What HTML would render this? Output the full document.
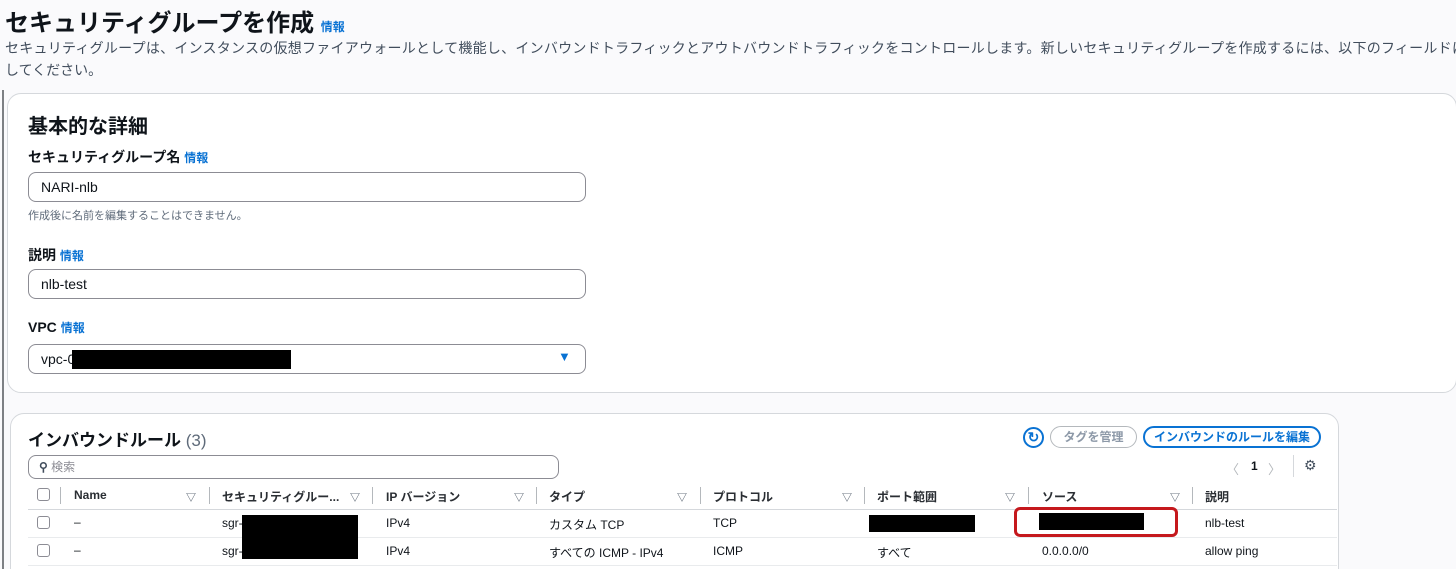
<!DOCTYPE html>
<html><head><meta charset="utf-8"><style>
*{box-sizing:border-box;margin:0;padding:0}
html,body{width:1456px;height:569px;overflow:hidden}
body{background:#fafafc;font-family:"Liberation Sans","Noto Sans CJK JP",sans-serif;color:#0f141a;position:relative}
.a{position:absolute;white-space:nowrap}
.info{color:#0972d3;font-weight:bold;font-size:12px}
.card{position:absolute;background:#fff;border:1px solid #d5d8dc;border-radius:14px}
.inp{position:absolute;border:1px solid #8c8c94;border-radius:8px;background:#fff;font-size:14px;padding-left:12px;line-height:28px}
.lbl{font-size:14px;font-weight:bold}
.blk{position:absolute;background:#000}
.th{position:absolute;top:488px;font-size:12px;font-weight:bold;color:#2a2e33}
.sep{position:absolute;top:487px;width:1px;height:17px;background:#b4b8bc}
.tri{position:absolute;top:489px;font-size:10px;color:#414d5c}
.td{position:absolute;font-size:12px;color:#0f141a}
.cb{position:absolute;width:13px;height:13px;border:1px solid #8c8c94;border-radius:3px;background:#fff}
</style></head><body>
<div class="a" style="left:2px;top:90px;width:2px;height:479px;background:#7d8084"></div>
<div class="a" style="left:5px;top:3px;font-size:24px;font-weight:bold">セキュリティグループを作成 <span class="info" style="font-size:12px">情報</span></div>
<div class="a" style="left:5px;top:38px;font-size:14px;letter-spacing:0.25px;color:#414d5c">セキュリティグループは、インスタンスの仮想ファイアウォールとして機能し、インバウンドトラフィックとアウトバウンドトラフィックをコントロールします。新しいセキュリティグループを作成するには、以下のフィールドに</div>
<div class="a" style="left:5px;top:60px;font-size:14px;color:#414d5c">してください。</div>

<div class="card" style="left:7px;top:93px;width:1450px;height:300px"></div>
<div class="a" style="left:28px;top:110px;font-size:20px;font-weight:bold">基本的な詳細</div>
<div class="a lbl" style="left:28px;top:147px">セキュリティグループ名 <span class="info">情報</span></div>
<div class="inp" style="left:28px;top:172px;width:558px;height:30px">NARI-nlb</div>
<div class="a" style="left:28px;top:207px;font-size:11px;color:#5f6b7a">作成後に名前を編集することはできません。</div>
<div class="a lbl" style="left:28px;top:245px">説明 <span class="info">情報</span></div>
<div class="inp" style="left:28px;top:269px;width:558px;height:30px">nlb-test</div>
<div class="a lbl" style="left:28px;top:319px">VPC <span class="info">情報</span></div>
<div class="inp" style="left:28px;top:344px;width:558px;height:30px">vpc-0</div>
<div class="blk" style="left:72px;top:350px;width:219px;height:19px"></div>
<div class="a" style="left:558px;top:349px;color:#0972d3;font-size:13px">▼</div>

<div class="card" style="left:10px;top:413px;width:1329px;height:170px"></div>
<div class="a" style="left:28px;top:426px;font-size:17px;font-weight:bold">インバウンドルール <span style="font-weight:normal;color:#5f6b7a">(3)</span></div>
<div class="a" style="left:1023px;top:427px;width:21px;height:21px;border:2px solid #0972d3;border-radius:50%;color:#0972d3;font-size:14px;font-weight:bold;text-align:center;line-height:17px">↻</div>
<div class="a" style="left:1050px;top:426px;width:87px;height:22px;border:1px solid #b4b8bc;border-radius:12px;color:#8d99a8;font-size:12px;font-weight:bold;text-align:center;line-height:20px">タグを管理</div>
<div class="a" style="left:1143px;top:426px;width:178px;height:22px;border:2px solid #0972d3;border-radius:12px;color:#0972d3;font-size:12px;font-weight:bold;text-align:center;line-height:18px">インバウンドのルールを編集</div>
<div class="inp" style="left:28px;top:455px;width:531px;height:24px;line-height:22px;font-size:12px;color:#8c8c94;padding-left:10px"><span style="color:#414d5c;font-weight:bold">⚲</span> 検索</div>
<div class="a" style="left:1226px;top:459px;font-size:13px;color:#b4b8bc">〈</div>
<div class="a" style="left:1251px;top:459px;font-size:12px;font-weight:bold">1</div>
<div class="a" style="left:1268px;top:459px;font-size:13px;color:#b4b8bc">〉</div>
<div class="a" style="left:1293px;top:455px;width:1px;height:22px;background:#d5d8dc"></div>
<div class="a" style="left:1304px;top:457px;font-size:14px;color:#414d5c">⚙</div>

<div class="cb" style="left:37px;top:488px"></div>
<div class="sep" style="left:60px"></div>
<div class="th" style="left:74px">Name</div><div class="tri" style="left:186px">▽</div>
<div class="sep" style="left:209px"></div>
<div class="th" style="left:222px">セキュリティグルー...</div><div class="tri" style="left:350px">▽</div>
<div class="sep" style="left:372px"></div>
<div class="th" style="left:386px">IP バージョン</div><div class="tri" style="left:514px">▽</div>
<div class="sep" style="left:536px"></div>
<div class="th" style="left:549px">タイプ</div><div class="tri" style="left:677px">▽</div>
<div class="sep" style="left:700px"></div>
<div class="th" style="left:713px">プロトコル</div><div class="tri" style="left:842px">▽</div>
<div class="sep" style="left:864px"></div>
<div class="th" style="left:877px">ポート範囲</div><div class="tri" style="left:1005px">▽</div>
<div class="sep" style="left:1028px"></div>
<div class="th" style="left:1042px">ソース</div><div class="tri" style="left:1170px">▽</div>
<div class="sep" style="left:1192px"></div>
<div class="th" style="left:1205px">説明</div>
<div class="a" style="left:28px;top:509px;width:1309px;height:1px;background:#d5d8dc"></div>
<div class="a" style="left:28px;top:537px;width:1309px;height:1px;background:#e9ebed"></div>
<div class="a" style="left:28px;top:565px;width:1309px;height:1px;background:#e9ebed"></div>

<div class="cb" style="left:37px;top:516px"></div>
<div class="td" style="left:74px;top:515px">–</div>
<div class="td" style="left:222px;top:516px">sgr-</div>
<div class="td" style="left:386px;top:516px">IPv4</div>
<div class="td" style="left:549px;top:516px">カスタム TCP</div>
<div class="td" style="left:713px;top:516px">TCP</div>
<div class="blk" style="left:869px;top:515px;width:106px;height:17px"></div>
<div class="a" style="left:1014px;top:507px;width:164px;height:30px;border:3px solid #c5181d;border-radius:6px"></div>
<div class="blk" style="left:1039px;top:513px;width:105px;height:17px"></div>
<div class="td" style="left:1205px;top:516px">nlb-test</div>

<div class="cb" style="left:37px;top:544px"></div>
<div class="td" style="left:74px;top:543px">–</div>
<div class="td" style="left:222px;top:544px">sgr-</div>
<div class="blk" style="left:242px;top:515px;width:116px;height:44px"></div>
<div class="td" style="left:386px;top:544px">IPv4</div>
<div class="td" style="left:549px;top:544px">すべての ICMP - IPv4</div>
<div class="td" style="left:713px;top:544px">ICMP</div>
<div class="td" style="left:877px;top:544px">すべて</div>
<div class="td" style="left:1042px;top:544px">0.0.0.0/0</div>
<div class="td" style="left:1205px;top:544px">allow ping</div>
</body></html>
